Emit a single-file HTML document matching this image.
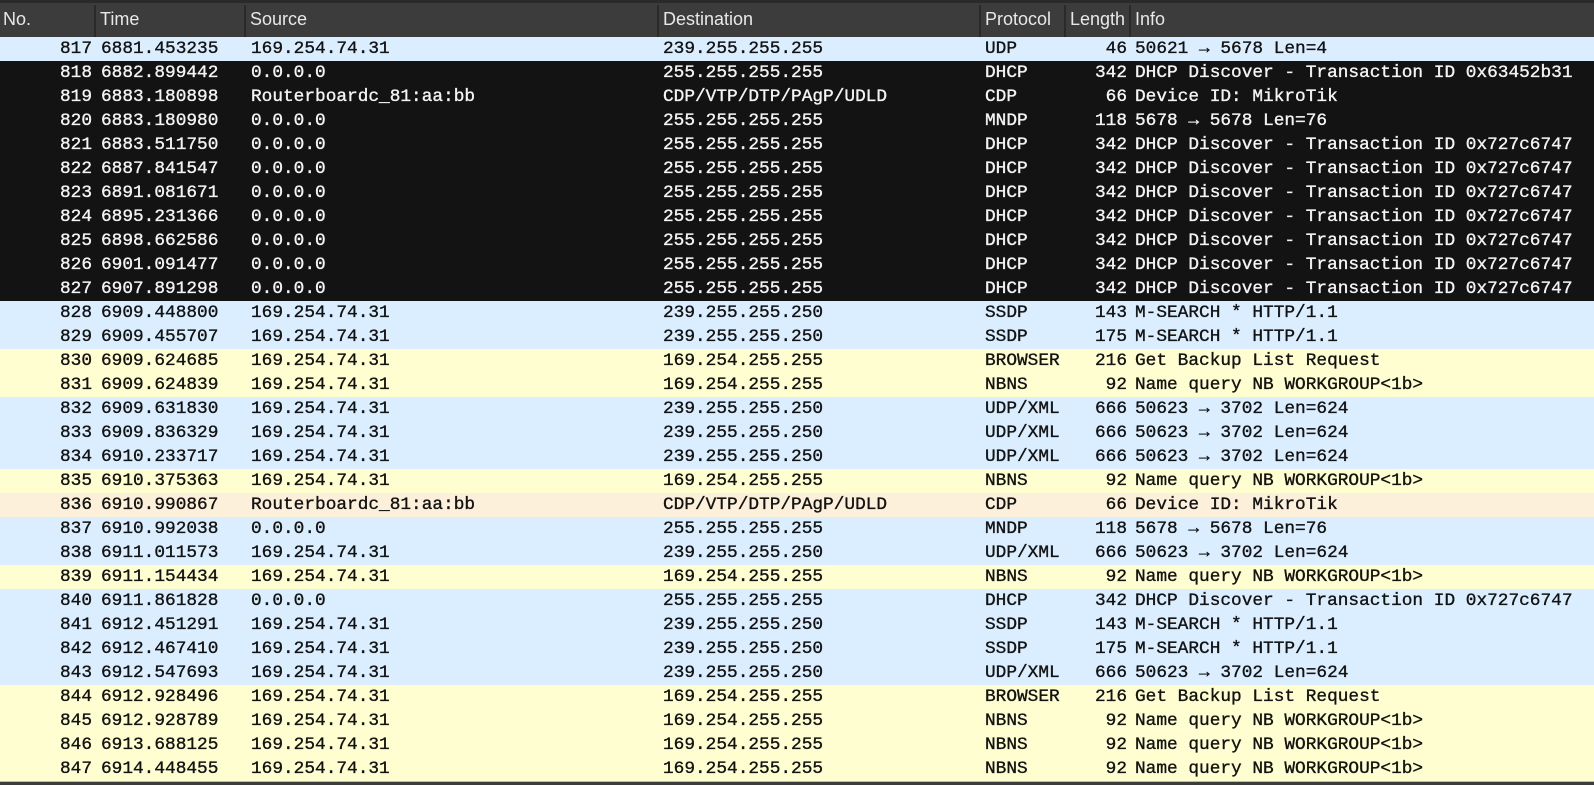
<!DOCTYPE html><html><head><meta charset="utf-8"><style>
body{margin:0;width:1594px;height:784px;background:#fff;overflow:hidden;position:relative;font-family:"Liberation Mono","DejaVu Sans Mono",monospace;}
.hd{position:absolute;left:0;top:0;width:1594px;height:37px;background:#3c3c3c;border-top:3px solid #2a2a2a;box-sizing:border-box;font-family:"Liberation Sans",sans-serif;font-size:18px;color:#e8e8e8;}
.hd span{position:absolute;top:6px;}
.sep{position:absolute;top:2px;width:2px;height:32px;background:#2a2a2a;}
.r{position:absolute;left:0;width:1594px;height:24px;font-size:17.8px;line-height:24px;color:#121212;white-space:pre;-webkit-text-stroke:0.35px #121212;}
.r span{position:absolute;top:0;}
.b{background:#daeeff}.y{background:#fefed1}.o{background:#fdf0da}.d{background:#131313;color:#f4f4f4;-webkit-text-stroke:0.35px #f4f4f4}
.n{right:1502px;text-align:right}
.t{left:101px}.s{left:251px}.ds{left:663px}.p{left:985px}.l{right:467px}.i{left:1135px}
.bot{position:absolute;left:0;top:781px;width:1594px;height:3px;background:#3c3c3c;border-top:1px solid #9cc4ea}
</style></head><body>
<div class="hd"><span style="left:3px">No.</span><div class="sep" style="left:94px"></div><span style="left:100px">Time</span><div class="sep" style="left:244px"></div><span style="left:250px">Source</span><div class="sep" style="left:657px"></div><span style="left:663px">Destination</span><div class="sep" style="left:979px"></div><span style="left:985px">Protocol</span><div class="sep" style="left:1064px"></div><span style="left:1070px">Length</span><div class="sep" style="left:1129px"></div><span style="left:1135px">Info</span></div>
<div class="r b" style="top:37px"><span class="n">817</span><span class="t">6881.453235</span><span class="s">169.254.74.31</span><span class="ds">239.255.255.255</span><span class="p">UDP</span><span class="l">46</span><span class="i">50621 → 5678 Len=4</span></div>
<div class="r d" style="top:61px"><span class="n">818</span><span class="t">6882.899442</span><span class="s">0.0.0.0</span><span class="ds">255.255.255.255</span><span class="p">DHCP</span><span class="l">342</span><span class="i">DHCP Discover - Transaction ID 0x63452b31</span></div>
<div class="r d" style="top:85px"><span class="n">819</span><span class="t">6883.180898</span><span class="s">Routerboardc_81:aa:bb</span><span class="ds">CDP/VTP/DTP/PAgP/UDLD</span><span class="p">CDP</span><span class="l">66</span><span class="i">Device ID: MikroTik</span></div>
<div class="r d" style="top:109px"><span class="n">820</span><span class="t">6883.180980</span><span class="s">0.0.0.0</span><span class="ds">255.255.255.255</span><span class="p">MNDP</span><span class="l">118</span><span class="i">5678 → 5678 Len=76</span></div>
<div class="r d" style="top:133px"><span class="n">821</span><span class="t">6883.511750</span><span class="s">0.0.0.0</span><span class="ds">255.255.255.255</span><span class="p">DHCP</span><span class="l">342</span><span class="i">DHCP Discover - Transaction ID 0x727c6747</span></div>
<div class="r d" style="top:157px"><span class="n">822</span><span class="t">6887.841547</span><span class="s">0.0.0.0</span><span class="ds">255.255.255.255</span><span class="p">DHCP</span><span class="l">342</span><span class="i">DHCP Discover - Transaction ID 0x727c6747</span></div>
<div class="r d" style="top:181px"><span class="n">823</span><span class="t">6891.081671</span><span class="s">0.0.0.0</span><span class="ds">255.255.255.255</span><span class="p">DHCP</span><span class="l">342</span><span class="i">DHCP Discover - Transaction ID 0x727c6747</span></div>
<div class="r d" style="top:205px"><span class="n">824</span><span class="t">6895.231366</span><span class="s">0.0.0.0</span><span class="ds">255.255.255.255</span><span class="p">DHCP</span><span class="l">342</span><span class="i">DHCP Discover - Transaction ID 0x727c6747</span></div>
<div class="r d" style="top:229px"><span class="n">825</span><span class="t">6898.662586</span><span class="s">0.0.0.0</span><span class="ds">255.255.255.255</span><span class="p">DHCP</span><span class="l">342</span><span class="i">DHCP Discover - Transaction ID 0x727c6747</span></div>
<div class="r d" style="top:253px"><span class="n">826</span><span class="t">6901.091477</span><span class="s">0.0.0.0</span><span class="ds">255.255.255.255</span><span class="p">DHCP</span><span class="l">342</span><span class="i">DHCP Discover - Transaction ID 0x727c6747</span></div>
<div class="r d" style="top:277px"><span class="n">827</span><span class="t">6907.891298</span><span class="s">0.0.0.0</span><span class="ds">255.255.255.255</span><span class="p">DHCP</span><span class="l">342</span><span class="i">DHCP Discover - Transaction ID 0x727c6747</span></div>
<div class="r b" style="top:301px"><span class="n">828</span><span class="t">6909.448800</span><span class="s">169.254.74.31</span><span class="ds">239.255.255.250</span><span class="p">SSDP</span><span class="l">143</span><span class="i">M-SEARCH * HTTP/1.1</span></div>
<div class="r b" style="top:325px"><span class="n">829</span><span class="t">6909.455707</span><span class="s">169.254.74.31</span><span class="ds">239.255.255.250</span><span class="p">SSDP</span><span class="l">175</span><span class="i">M-SEARCH * HTTP/1.1</span></div>
<div class="r y" style="top:349px"><span class="n">830</span><span class="t">6909.624685</span><span class="s">169.254.74.31</span><span class="ds">169.254.255.255</span><span class="p">BROWSER</span><span class="l">216</span><span class="i">Get Backup List Request</span></div>
<div class="r y" style="top:373px"><span class="n">831</span><span class="t">6909.624839</span><span class="s">169.254.74.31</span><span class="ds">169.254.255.255</span><span class="p">NBNS</span><span class="l">92</span><span class="i">Name query NB WORKGROUP&lt;1b&gt;</span></div>
<div class="r b" style="top:397px"><span class="n">832</span><span class="t">6909.631830</span><span class="s">169.254.74.31</span><span class="ds">239.255.255.250</span><span class="p">UDP/XML</span><span class="l">666</span><span class="i">50623 → 3702 Len=624</span></div>
<div class="r b" style="top:421px"><span class="n">833</span><span class="t">6909.836329</span><span class="s">169.254.74.31</span><span class="ds">239.255.255.250</span><span class="p">UDP/XML</span><span class="l">666</span><span class="i">50623 → 3702 Len=624</span></div>
<div class="r b" style="top:445px"><span class="n">834</span><span class="t">6910.233717</span><span class="s">169.254.74.31</span><span class="ds">239.255.255.250</span><span class="p">UDP/XML</span><span class="l">666</span><span class="i">50623 → 3702 Len=624</span></div>
<div class="r y" style="top:469px"><span class="n">835</span><span class="t">6910.375363</span><span class="s">169.254.74.31</span><span class="ds">169.254.255.255</span><span class="p">NBNS</span><span class="l">92</span><span class="i">Name query NB WORKGROUP&lt;1b&gt;</span></div>
<div class="r o" style="top:493px"><span class="n">836</span><span class="t">6910.990867</span><span class="s">Routerboardc_81:aa:bb</span><span class="ds">CDP/VTP/DTP/PAgP/UDLD</span><span class="p">CDP</span><span class="l">66</span><span class="i">Device ID: MikroTik</span></div>
<div class="r b" style="top:517px"><span class="n">837</span><span class="t">6910.992038</span><span class="s">0.0.0.0</span><span class="ds">255.255.255.255</span><span class="p">MNDP</span><span class="l">118</span><span class="i">5678 → 5678 Len=76</span></div>
<div class="r b" style="top:541px"><span class="n">838</span><span class="t">6911.011573</span><span class="s">169.254.74.31</span><span class="ds">239.255.255.250</span><span class="p">UDP/XML</span><span class="l">666</span><span class="i">50623 → 3702 Len=624</span></div>
<div class="r y" style="top:565px"><span class="n">839</span><span class="t">6911.154434</span><span class="s">169.254.74.31</span><span class="ds">169.254.255.255</span><span class="p">NBNS</span><span class="l">92</span><span class="i">Name query NB WORKGROUP&lt;1b&gt;</span></div>
<div class="r b" style="top:589px"><span class="n">840</span><span class="t">6911.861828</span><span class="s">0.0.0.0</span><span class="ds">255.255.255.255</span><span class="p">DHCP</span><span class="l">342</span><span class="i">DHCP Discover - Transaction ID 0x727c6747</span></div>
<div class="r b" style="top:613px"><span class="n">841</span><span class="t">6912.451291</span><span class="s">169.254.74.31</span><span class="ds">239.255.255.250</span><span class="p">SSDP</span><span class="l">143</span><span class="i">M-SEARCH * HTTP/1.1</span></div>
<div class="r b" style="top:637px"><span class="n">842</span><span class="t">6912.467410</span><span class="s">169.254.74.31</span><span class="ds">239.255.255.250</span><span class="p">SSDP</span><span class="l">175</span><span class="i">M-SEARCH * HTTP/1.1</span></div>
<div class="r b" style="top:661px"><span class="n">843</span><span class="t">6912.547693</span><span class="s">169.254.74.31</span><span class="ds">239.255.255.250</span><span class="p">UDP/XML</span><span class="l">666</span><span class="i">50623 → 3702 Len=624</span></div>
<div class="r y" style="top:685px"><span class="n">844</span><span class="t">6912.928496</span><span class="s">169.254.74.31</span><span class="ds">169.254.255.255</span><span class="p">BROWSER</span><span class="l">216</span><span class="i">Get Backup List Request</span></div>
<div class="r y" style="top:709px"><span class="n">845</span><span class="t">6912.928789</span><span class="s">169.254.74.31</span><span class="ds">169.254.255.255</span><span class="p">NBNS</span><span class="l">92</span><span class="i">Name query NB WORKGROUP&lt;1b&gt;</span></div>
<div class="r y" style="top:733px"><span class="n">846</span><span class="t">6913.688125</span><span class="s">169.254.74.31</span><span class="ds">169.254.255.255</span><span class="p">NBNS</span><span class="l">92</span><span class="i">Name query NB WORKGROUP&lt;1b&gt;</span></div>
<div class="r y" style="top:757px"><span class="n">847</span><span class="t">6914.448455</span><span class="s">169.254.74.31</span><span class="ds">169.254.255.255</span><span class="p">NBNS</span><span class="l">92</span><span class="i">Name query NB WORKGROUP&lt;1b&gt;</span></div>
<div class="bot"></div>
</body></html>
